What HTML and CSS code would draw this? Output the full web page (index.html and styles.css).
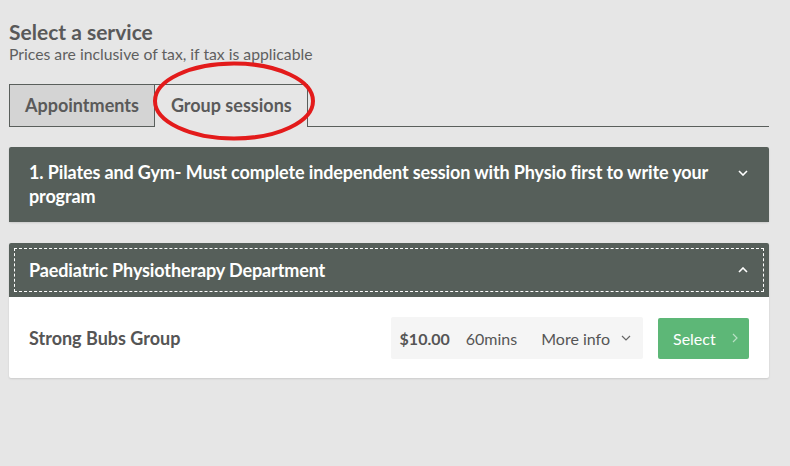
FILE: index.html
```html
<!DOCTYPE html>
<html>
<head>
<meta charset="utf-8">
<link rel="stylesheet" href="styles.css">
</head>
<body>
<div class="page">
  <h1 class="title">Select a service</h1>
  <p class="subtitle">Prices are inclusive of tax, if tax is applicable</p>
  <div class="tabs">
    <div class="tab">Appointments</div>
    <div class="tab active">Group sessions</div>
    <div class="tab-rest"></div>
    <svg class="annot" width="170" height="86" viewBox="0 0 170 86"><ellipse cx="85" cy="43" rx="79" ry="37.5" fill="none" stroke="#e31b1b" stroke-width="4"/></svg>
  </div>
  <div class="panel">
    <div class="panel-head">
      <span class="panel-title">1. Pilates and Gym- Must complete independent session with Physio first to write your program</span>
      <svg class="chev" width="10" height="6" viewBox="0 0 10 6"><path d="M1 1 L5 5 L9 1" fill="none" stroke="#fff" stroke-width="1.6"/></svg>
    </div>
  </div>
  <div class="panel open">
    <div class="panel-head focus">
      <span class="panel-title">Paediatric Physiotherapy Department</span>
      <svg class="chev" width="10" height="6" viewBox="0 0 10 6"><path d="M1 5 L5 1 L9 5" fill="none" stroke="#fff" stroke-width="1.6"/></svg>
    </div>
    <div class="panel-body">
      <div class="svc-name">Strong Bubs Group</div>
      <div class="meta">
        <span class="price">$10.00</span>
        <span class="dur">60mins</span>
        <span class="more">More info <svg width="10" height="6" viewBox="0 0 10 6"><path d="M1 1 L5 5 L9 1" fill="none" stroke="#666" stroke-width="1.2"/></svg></span>
      </div>
      <button class="select">Select <svg width="6" height="10" viewBox="0 0 6 10"><path d="M1 1 L5 5 L1 9" fill="none" stroke="#b8e0c4" stroke-width="1.2"/></svg></button>
    </div>
  </div>
</div>
</body>
</html>
```

FILE: styles.css
```css
* { box-sizing: border-box; }
html, body { margin: 0; padding: 0; }
body {
  background: #e6e6e6;
  font-family: Lato, "Open Sans", sans-serif;
  color: #555;
  width: 790px;
  height: 466px;
  overflow: hidden;
}
.page {
  padding: 20px 21px 0 9px;
}
.title {
  margin: 0;
  font-size: 21px;
  font-weight: 700;
  line-height: 24px;
  color: #595959;
}
.subtitle {
  margin: 0;
  font-size: 15.75px;
  line-height: 20px;
  color: #5f5f5f;
}
.tabs {
  position: relative;
  display: flex;
  margin-top: 20px;
  height: 43px;
}
.tab {
  border: 1px solid #5a5f5c;
  background: #d4d4d4;
  font-size: 18px;
  font-weight: 700;
  color: #5a5a5a;
  padding: 0 15px;
  line-height: 40px;
  height: 43px;
}
.tab.active {
  background: #e6e6e6;
  border-left: none;
  border-bottom: none;
  padding: 0 15px 0 16px;
}
.tab-rest {
  flex: 1;
  border-bottom: 1px solid #5a5f5c;
}
.annot {
  position: absolute;
  left: 140px;
  top: -26px;
}
.panel {
  margin-top: 20px;
  background: #fff;
  border-radius: 2px;
  box-shadow: 0 1px 2px rgba(0,0,0,0.12);
}
.panel + .panel {
  margin-top: 21px;
}
.panel-head {
  background: #565f5a;
  color: #fff;
  display: flex;
  align-items: flex-start;
  padding: 13px 20px 14px 20px;
  border-radius: 2px 2px 0 0;
}
.panel-title {
  flex: 1;
  font-size: 18px;
  font-weight: 700;
  line-height: 24px;
  padding-right: 6px;
  letter-spacing: -0.12px;
}
.panel-head .chev { margin-top: 10px; margin-right: 1px; }
.panel-head.focus {
  position: relative;
  align-items: center;
  padding: 15px 20px;
}
.panel-head.focus .chev { margin-top: 0; }
.panel-head.focus::after {
  content: "";
  position: absolute;
  left: 5px; right: 5px; top: 5px; bottom: 5px;
  border: 1px dashed #fff;
}
.panel-body {
  display: flex;
  align-items: center;
  padding: 20px 20px 19px 20px;
  height: 81px;
}
.svc-name {
  flex: 1;
  font-size: 18px;
  font-weight: 700;
  color: #555;
}
.meta {
  display: flex;
  align-items: center;
  background: #f5f5f5;
  height: 42px;
  border-radius: 2px;
  padding: 0 12px 0 9px;
  font-size: 16px;
  color: #555;
}
.price { font-weight: 700; font-size: 16px; }
.dur { margin-left: 16px; }
.more { margin-left: 24px; display: flex; align-items: center; gap: 11px; }
.select {
  margin-left: 15px;
  width: 91px;
  height: 41px;
  background: #5db777;
  color: #fff;
  border: none;
  border-radius: 2px;
  font-family: Lato, "Open Sans", sans-serif;
  font-size: 16px;
  display: flex;
  align-items: center;
  padding: 0 0 0 15px;
  gap: 16px;
}
```
